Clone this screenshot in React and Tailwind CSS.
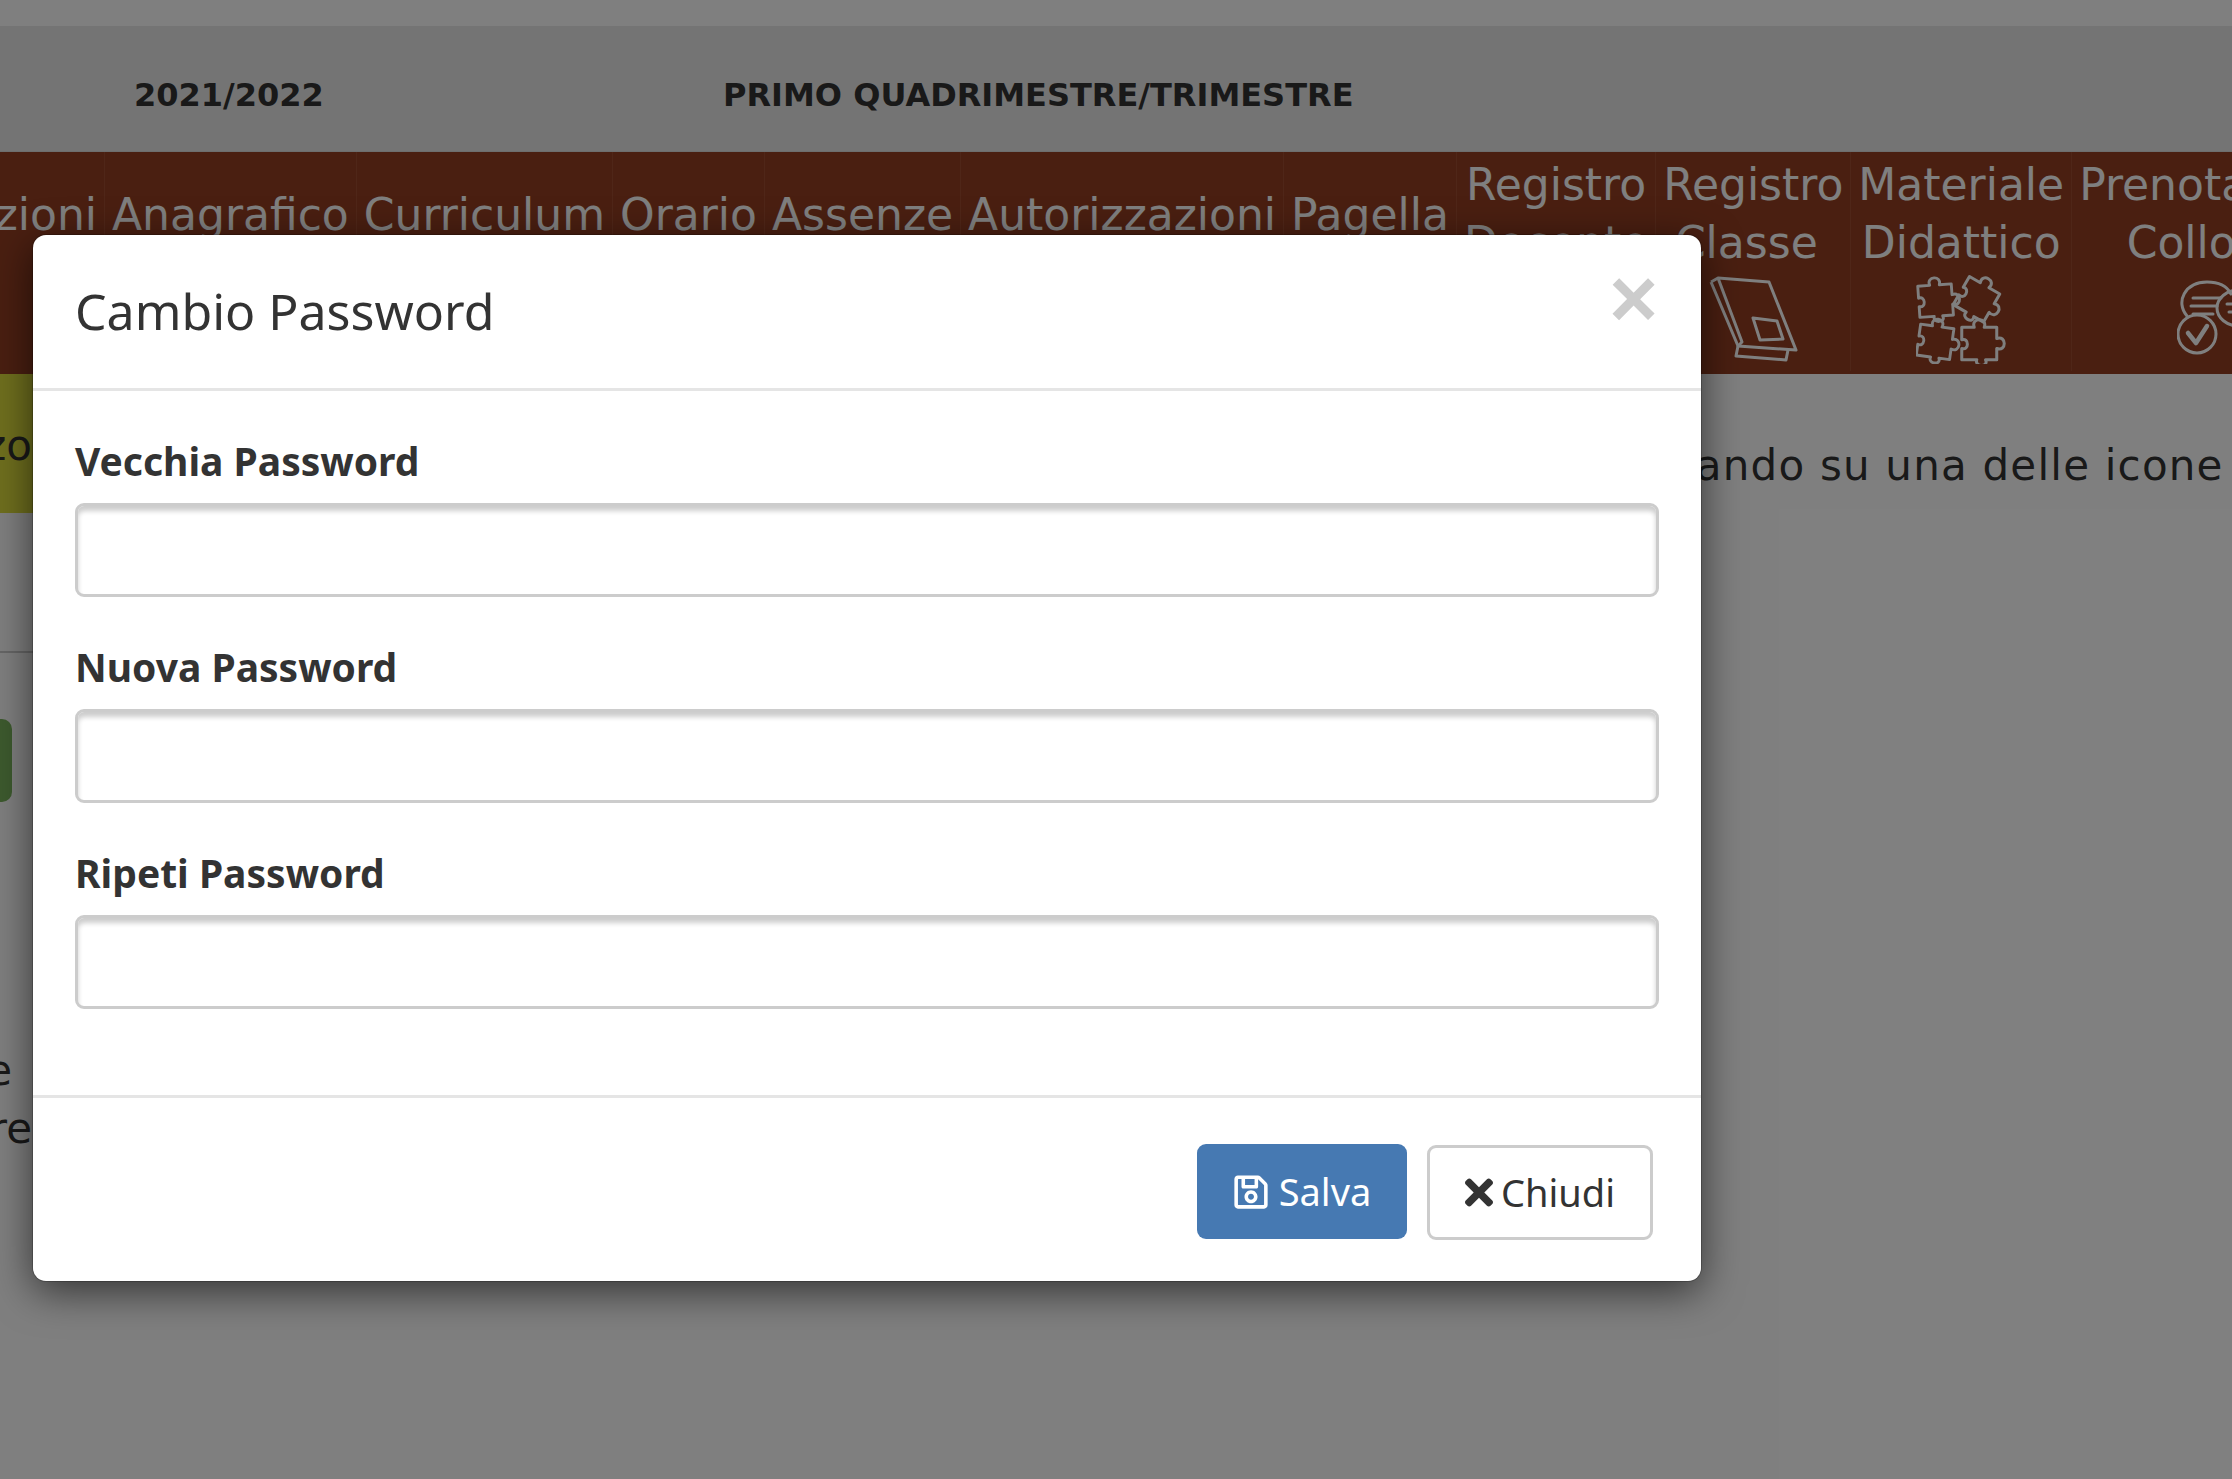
import React from 'react';
import { FaRegSave, FaTimes } from 'react-icons/fa';

const navItems = [
    { lines: ['Comunicazioni'] },
    { lines: ['Anagrafico'] },
    { lines: ['Curriculum'] },
    { lines: ['Orario'] },
    { lines: ['Assenze'] },
    { lines: ['Autorizzazioni'] },
    { lines: ['Pagella'] },
    { lines: ['Registro', 'Docente'] },
    { lines: ['Registro', 'Classe\u00a0'], icon: 'book' },
    { lines: ['Materiale', 'Didattico'], icon: 'puzzle' },
    { lines: ['Prenotazione', 'Colloqui\u00a0'], icon: 'talk' },
];

const PIECE = 'M3 9 H13 c-3 -8 11 -8 8 0 H31 V18 c8 -3 8 11 0 8 V35 H22 c3 6 -9 6 -7 0 H3 V26 c6 2 6 -9 0 -7 Z';

const BookIcon = () => (
    <svg viewBox="0 0 90 90" className="w-[90px] h-[90px]" fill="none" stroke="#fff" strokeWidth="3" strokeLinejoin="round">
        <path d="M3 8 L10 4 L61 8 L88 76 L30 72 L3 8" />
        <path d="M10 4 L34 68 L30 72" />
        <path d="M30 72 L28 82 L78 86 L80 76" />
        <path d="M45 44 L69 47 L75 65 L52 66 Z" />
    </svg>
);

const PuzzleIcon = () => (
    <svg viewBox="0 0 90 90" className="w-[90px] h-[90px]" fill="none" stroke="#fff" strokeWidth="2.4" strokeLinejoin="round">
        <g transform="translate(-1 0) scale(1.2) rotate(-4 20 20)"><path d={PIECE} /></g>
        <g transform="translate(40 0) scale(1.25) rotate(30 20 20)"><path d={PIECE} /></g>
        <g transform="translate(-1 42) scale(1.2) rotate(8 20 20)"><path d={PIECE} /></g>
        <g transform="translate(42 42) scale(1.25)"><path d={PIECE} /></g>
    </svg>
);

const TalkIcon = () => (
    <svg viewBox="0 0 90 90" className="w-[90px] h-[90px]" fill="none" stroke="#fff" strokeWidth="3" strokeLinecap="round" strokeLinejoin="round">
        <path d="M10 42 C-2 28 8 8 30 8 C42 8 50 12 54 20" />
        <path d="M16 24 H44 M14 32 H40 M16 40 H36" strokeWidth="3" />
        <circle cx="20" cy="60" r="19" />
        <path d="M11 59 L19 69 L30 52" strokeWidth="4.5" />
        <ellipse cx="62" cy="34" rx="22" ry="18" />
        <path d="M50 30 H74 M52 38 H70" strokeWidth="3" />
    </svg>
);

const icons = { book: <BookIcon />, puzzle: <PuzzleIcon />, talk: <TalkIcon /> };

const PasswordField = ({ label }) => (
    <div className="mb-[20px]">
        <label className="block h-[92px] pt-[25px] text-[39px] leading-[50px] font-bold text-[#333]">{label}</label>
        <input
            type="password"
            className="block w-full h-[94px] bg-white rounded-[9px] border-[3px] border-[#ccc] shadow-[inset_0_5px_5px_rgba(0,0,0,0.2)]"
        />
    </div>
);

const App = () => {
    return (
        <div className="relative w-full h-[1479px] overflow-hidden bg-white font-['DejaVu_Sans',sans-serif]">
            {/* page behind the dialog, scrolled sideways */}
            <div className="w-[2900px] -ml-[212px]">
                <div className="h-[26px] bg-white"></div>
                <div className="h-[126px] flex items-center pt-[13px] bg-[#e9e9e9] border-b border-[#ddd] text-[#333] font-bold text-[32px]">
                    <span className="ml-[346px] w-[589px]">2021/2022</span>
                    <span>PRIMO QUADRIMESTRE/TRIMESTRE</span>
                </div>
                <div className="h-[222px] flex justify-start pb-[3px] -ml-[20px] bg-[#943f22] text-white text-[44px] leading-[58px] overflow-hidden">
                    {navItems.map((item) => (
                        <div key={item.lines.join()} className="flex flex-col items-center justify-center px-[7px] border-r border-[#9e4c30]">
                            {item.lines.map((line) => <span key={line}>{line}</span>)}
                            <div className={item.lines.length > 1 ? 'h-[95px] pt-[2px]' : 'h-[94px]'}>{icons[item.icon]}</div>
                        </div>
                    ))}
                </div>
                <div className="flex">
                    <div className="w-[300px] text-[#333] text-[42px] leading-[58px] text-right">
                        <div className="h-[139px] flex items-center justify-end pt-[5px] pr-[56px] bg-[#dede3c]">Indirizzo</div>
                        <div className="h-[140px] border-b-2 border-[#ccc]"></div>
                        <div className="mt-[66px] w-[224px] h-[83px] rounded-[10px] bg-[#7ab55c]"></div>
                        <div className="mt-[240px] pr-[76px]">Docente</div>
                        <div className="pr-[56px]">Lettore</div>
                    </div>
                    <div className="flex-1 pl-[1503px] pt-[63px] text-[#333] text-[42px] leading-[58px] tracking-[1.2px] whitespace-nowrap">
                        Cliccando su una delle icone sovrastanti
                    </div>
                </div>
            </div>

            <div className="absolute inset-0 bg-black/50"></div>

            <div className="absolute left-[33px] top-[235px] w-[1668px] h-[1046px] flex flex-col rounded-[13px] bg-white shadow-[0_0_0_1px_rgba(0,0,0,0.2),0_10px_40px_rgba(0,0,0,0.6)] font-['Noto_Sans',sans-serif]">
                <div className="h-[156px] shrink-0 flex justify-between pl-[42px] pr-[43px] border-b-[3px] border-[#e5e5e5]">
                    <h4 className="mt-[41px] text-[50px] leading-[70px] text-[#333]">Cambio Password</h4>
                    <span className="mt-[23px] text-[84px] leading-[80px] font-bold text-[#ccc] font-['Liberation_Sans',sans-serif]">×</span>
                </div>
                <div className="flex-1 px-[42px] pt-[20px]">
                    <PasswordField label="Vecchia Password" />
                    <PasswordField label="Nuova Password" />
                    <PasswordField label="Ripeti Password" />
                </div>
                <div className="h-[186px] shrink-0 flex justify-end items-start gap-[20px] pt-[46px] pr-[48px] border-t-[3px] border-[#e5e5e5] text-[38px]">
                    <button className="w-[210px] h-[95px] flex items-center justify-center gap-[10px] rounded-[9px] bg-[#4679b2] text-white">
                        <FaRegSave className="w-[36px] h-[38px]" />
                        Salva
                    </button>
                    <button className="mt-[1px] w-[226px] h-[95px] flex items-center justify-center gap-[8px] rounded-[9px] border-[3px] border-[#ccc] bg-white text-[#333]">
                        <FaTimes className="w-[28px] h-[41px]" />
                        Chiudi
                    </button>
                </div>
            </div>
        </div>
    );
};

export default App;
